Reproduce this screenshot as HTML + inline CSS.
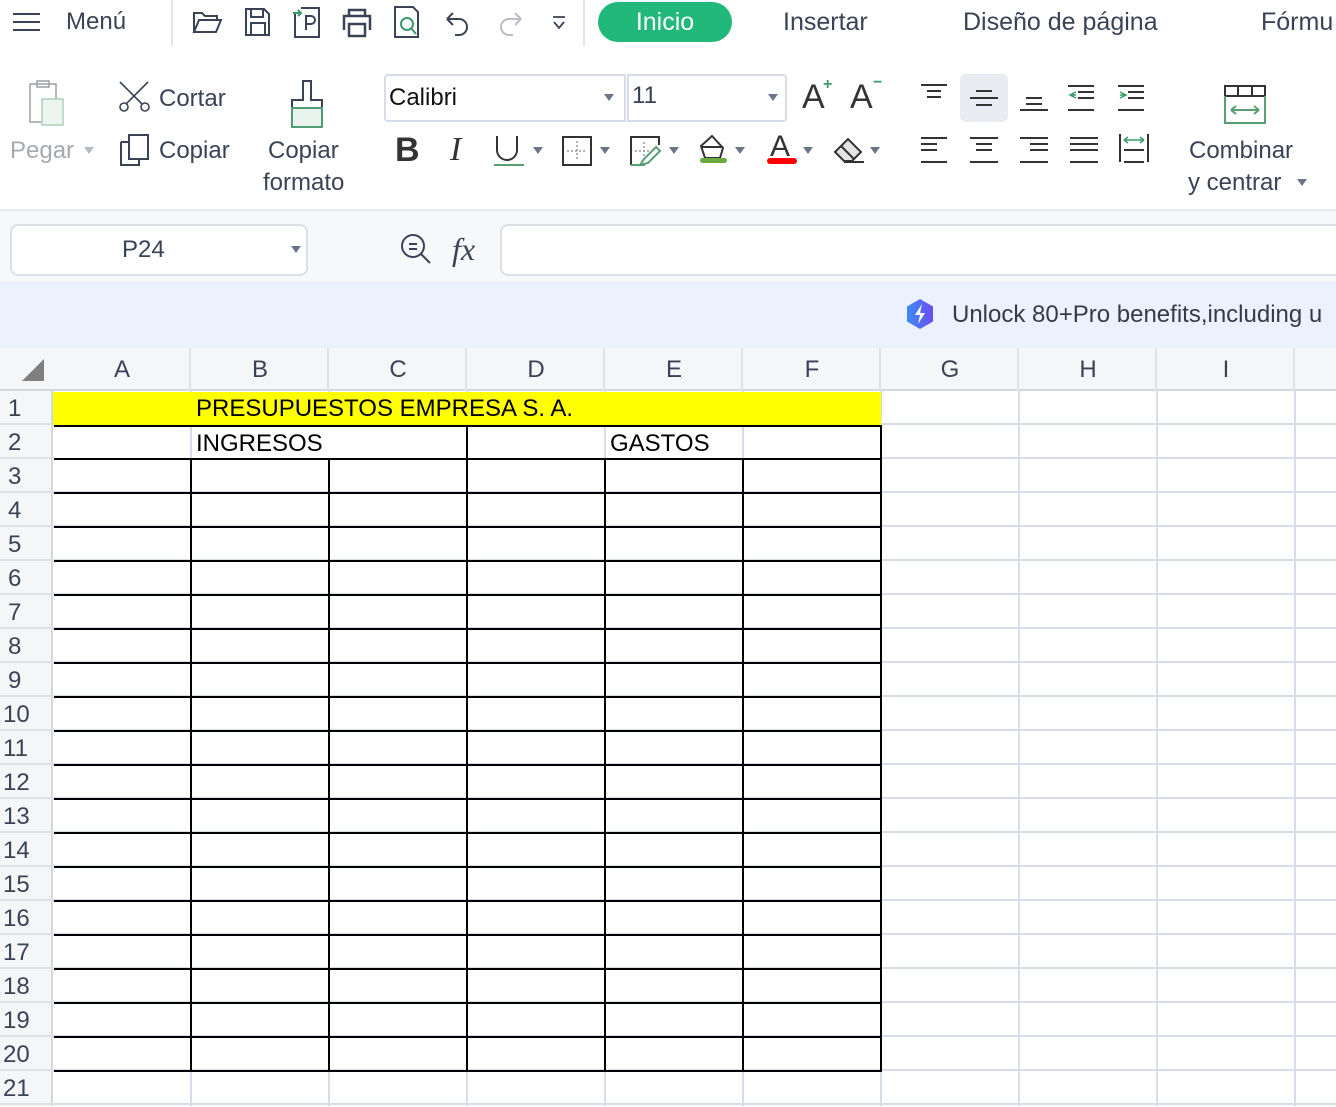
<!DOCTYPE html>
<html><head><meta charset="utf-8"><style>
*{margin:0;padding:0;box-sizing:border-box}
body{width:1336px;height:1106px;overflow:hidden;background:#fff;font-family:"Liberation Sans",sans-serif;color:#3a4355;position:relative}
.a{position:absolute}
.t{position:absolute;font-size:24px;color:#3a4355;white-space:nowrap}
svg{position:absolute;overflow:visible}
.rh{position:absolute;left:0;width:53px;height:34px;font-size:24px;color:#3a4355;padding-left:8px;line-height:36px}
.ch{position:absolute;top:348px;height:43px;width:138px;text-align:center;font-size:24px;line-height:43px;color:#3a4355}
.tri{position:absolute;width:0;height:0;border-left:5px solid transparent;border-right:5px solid transparent;border-top:7px solid #6b7588}
.vl{position:absolute;top:391px;width:2px;height:715px;background:#d6deea}
</style></head><body>
<!-- top bar -->
<svg style="left:12px;top:12px" width="30" height="20"><path d="M1 2H28M1 10H28M1 18H28" stroke="#3a4355" stroke-width="2"/></svg>
<div class="t" style="left:66px;top:8px">Menú</div>
<div class="a" style="left:171px;top:0;width:2px;height:46px;background:#e2e4e8"></div>
<div class="a" style="left:583px;top:0;width:2px;height:46px;background:#e2e4e8"></div>
<svg style="left:192px;top:10px" width="32" height="26" fill="none" stroke="#3a4355" stroke-width="2"><path d="M2 22V3h8l3 3h12v4M2 22l5-12h22l-5 12z"/></svg>
<svg style="left:244px;top:7px" width="28" height="30" fill="none" stroke="#3a4355" stroke-width="2"><path d="M2 2h18l5 5v21H2z M7 2v8h12V2 M7 28V16h14v12"/></svg>
<svg style="left:293px;top:6px" width="30" height="32" fill="none" stroke="#3a4355" stroke-width="2"><path d="M2 8V31h24V2H8"/><path d="M0 7h8M5 4l3 3-3 3" stroke="#3c9a6a"/><path d="M13 24V10h5a4 4 0 010 8h-5"/></svg>
<svg style="left:342px;top:8px" width="30" height="30" fill="none" stroke="#3a4355" stroke-width="2.5"><path d="M7 7V2h16v5M2 22V8h26v14M7 16h16v12H7z"/></svg>
<svg style="left:393px;top:5px" width="30" height="34" fill="none" stroke="#3a4355" stroke-width="2"><path d="M2 2h18l5 5v25H2z"/><circle cx="14" cy="19" r="6" stroke="#3c9a6a"/><path d="M18 23l5 6" stroke="#3c9a6a"/></svg>
<svg style="left:444px;top:10px" width="28" height="26" fill="none" stroke="#3a4355" stroke-width="2"><path d="M3 9h12a8 8 0 010 16h-4M3 9l6-6M3 9l6 6"/></svg>
<svg style="left:496px;top:10px" width="28" height="26" fill="none" stroke="#b8bcc4" stroke-width="2"><path d="M25 9H13a8 8 0 000 16h4M25 9l-6-6M25 9l-6 6"/></svg>
<svg style="left:551px;top:15px" width="16" height="16" fill="none" stroke="#3a4355" stroke-width="1.8"><path d="M2 2h12M3 7l5 6 5-6"/></svg>
<div class="a" style="left:598px;top:2px;width:134px;height:40px;border-radius:20px;background:#21b87a;color:#fff;font-size:25px;text-align:center;line-height:40px">Inicio</div>
<div class="t" style="left:783px;top:8px;font-size:25px">Insertar</div>
<div class="t" style="left:963px;top:8px;font-size:25px">Diseño de página</div>
<div class="t" style="left:1261px;top:8px;font-size:25px">Fórmu</div>
<!-- ribbon -->
<svg style="left:28px;top:79px" width="40" height="48" fill="none" stroke="#9a9ea6" stroke-width="1.5"><path d="M2 5h26v38H2z"/><path d="M9 2h12v6H9z"/><rect x="14" y="20" width="21" height="26" fill="#eef5f0" stroke="#a9d2b8"/></svg>
<div class="t" style="left:10px;top:137px;color:#a5a9b0">Pegar</div>
<div class="tri" style="left:84px;top:147px;border-top-color:#b5b9c0"></div>
<svg style="left:118px;top:80px" width="34" height="32" fill="none" stroke="#3a4355" stroke-width="1.6"><path d="M2 2l22 22M30 2L8 24"/><circle cx="6" cy="27" r="4"/><circle cx="27" cy="27" r="4"/></svg>
<div class="t" style="left:159px;top:85px">Cortar</div>
<svg style="left:119px;top:133px" width="32" height="34" fill="none" stroke="#3a4355" stroke-width="2"><path d="M10 2h19v24H10z M2 9h8M2 9v23h18v-6"/></svg>
<div class="t" style="left:159px;top:137px">Copiar</div>
<svg style="left:288px;top:79px" width="40" height="50" fill="none" stroke="#3a4355" stroke-width="2"><path d="M15 2h8v19h11v8H4v-8h11z"/><rect x="4" y="29" width="30" height="19" fill="#eaf4ee" stroke="#4f9c72"/></svg>
<div class="t" style="left:268px;top:137px">Copiar</div>
<div class="t" style="left:263px;top:169px">formato</div>
<div class="a" style="left:384px;top:74px;width:242px;height:48px;border:2px solid #d6dce8;border-radius:4px 0 0 4px"></div>
<div class="t" style="left:389px;top:84px;color:#111">Calibri</div>
<div class="tri" style="left:604px;top:94px"></div>
<div class="a" style="left:627px;top:74px;width:160px;height:48px;border:2px solid #d6dce8;border-radius:0 4px 4px 0"></div>
<div class="t" style="left:632px;top:82px">11</div>
<div class="tri" style="left:768px;top:94px"></div>
<div class="t" style="left:802px;top:78px;font-size:34px;color:#333">A</div><div class="t" style="left:823px;top:76px;font-size:16px;color:#3c9a6a;font-weight:bold">+</div>
<div class="t" style="left:850px;top:78px;font-size:34px;color:#333">A</div><div class="t" style="left:873px;top:74px;font-size:16px;color:#3c9a6a;font-weight:bold">−</div>
<div class="t" style="left:395px;top:131px;font-size:34px;font-weight:bold;color:#333">B</div>
<div class="t" style="left:450px;top:131px;font-size:34px;font-style:italic;color:#333;font-family:'Liberation Serif',serif">I</div>
<svg style="left:494px;top:134px" width="30" height="34" fill="none" stroke="#333" stroke-width="2"><path d="M3 2v14a10 10 0 0020 0V2"/><path d="M0 31h30" stroke="#5a9e74"/></svg>
<div class="tri" style="left:533px;top:147px"></div>
<svg style="left:562px;top:136px" width="30" height="30" fill="none" stroke="#333" stroke-width="2"><rect x="1" y="1" width="28" height="28"/><path d="M15 5v20M5 15h20" stroke="#999" stroke-dasharray="2 2" stroke-width="1.5"/></svg>
<div class="tri" style="left:600px;top:147px"></div>
<svg style="left:630px;top:136px" width="34" height="30" fill="none" stroke="#333" stroke-width="2"><path d="M1 29V1h28v8"/><path d="M14 6v18M5 15h16" stroke="#999" stroke-dasharray="2 2" stroke-width="1.5"/><path d="M10 29l4-6 12-12 4 4-12 12zM1 29h14" stroke="#5a9e74"/></svg>
<div class="tri" style="left:669px;top:147px"></div>
<svg style="left:699px;top:134px" width="32" height="32" fill="none" stroke="#333" stroke-width="2"><path d="M2 12l11-10 11 12-3 10H6z"/><path d="M2 13h22" /><rect x="1" y="24" width="27" height="5" rx="2.5" fill="#6aaa3f" stroke="none"/></svg>
<div class="tri" style="left:735px;top:147px"></div>
<div class="t" style="left:770px;top:130px;font-size:30px;color:#333">A</div>
<div class="a" style="left:767px;top:158px;width:30px;height:6px;border-radius:3px;background:#f00"></div>
<div class="tri" style="left:803px;top:147px"></div>
<svg style="left:833px;top:136px" width="36" height="30" fill="none" stroke="#333" stroke-width="2"><path d="M2 16L15 3l13 13-9 9H11z" fill="#e4e4e4"/><path d="M8 10l13 13M11 26h20"/></svg>
<div class="tri" style="left:870px;top:147px"></div>
<svg style="left:918px;top:82px" width="240" height="90" fill="none" stroke="#333" stroke-width="2">
<path d="M3 3h26M9 9h14M9 15h14"/>
<rect x="42" y="-8" width="48" height="48" rx="6" fill="#e9ecf0" stroke="none"/>
<path d="M52 16h28M58 9h16M58 23h16"/>
<path d="M102 28h28M108 22h16M108 16h16"/>
<path d="M150 4h26M160 10h16M160 16h16M150 28h26"/><path d="M158 10l-6 3 6 3M152 13h6" stroke="#3c9a6a" stroke-width="1.5"/>
<path d="M200 4h26M210 10h16M210 16h16M200 28h26"/><path d="M202 10l6 3-6 3M202 13h6" stroke="#3c9a6a" stroke-width="1.5"/>
<path d="M3 56h26M3 62h16M3 68h16M3 80h26"/>
<path d="M52 56h28M58 62h16M58 68h16M52 80h28"/>
<path d="M102 56h28M112 62h18M112 68h18M102 80h28"/>
<path d="M152 56h28M152 62h28M152 68h28M152 80h28"/>
<path d="M202 52v28M230 52v28M206 68h20M206 80h20"/><path d="M206 58h20M206 58l4-3M206 58l4 3M226 58l-4-3M226 58l-4 3" stroke="#3c9a6a" stroke-width="1.5"/>
</svg>
<svg style="left:1224px;top:85px" width="44" height="40" fill="none" stroke-width="2"><path d="M1 1h40v10H1z M14 1v10M28 1v10" stroke="#333"/><path d="M1 11v27h40V11" stroke="#5a9e74"/><path d="M7 25h28M7 25l5-4M7 25l5 4M35 25l-5-4M35 25l-5 4" stroke="#5a9e74"/></svg>
<div class="t" style="left:1189px;top:137px">Combinar</div>
<div class="t" style="left:1188px;top:169px">y centrar</div>
<div class="tri" style="left:1297px;top:179px"></div>
<!-- formula bar -->
<div class="a" style="left:0;top:209px;width:1336px;height:72px;background:#f7f8fa;border-top:2px solid #e8eaee"></div>
<div class="a" style="left:10px;top:224px;width:298px;height:52px;background:#fff;border:2px solid #dcdfe4;border-radius:8px"></div>
<div class="t" style="left:122px;top:236px">P24</div>
<div class="tri" style="left:291px;top:246px"></div>
<svg style="left:400px;top:233px" width="34" height="34" fill="none" stroke="#3a4355" stroke-width="2"><circle cx="13" cy="13" r="11"/><path d="M9 11h8M9 16h8M21 21l9 9"/></svg>
<div class="t" style="left:452px;top:231px;font-family:'Liberation Serif',serif;font-style:italic;font-size:32px">fx</div>
<div class="a" style="left:500px;top:224px;width:850px;height:52px;background:#fff;border:2px solid #dcdfe4;border-radius:8px"></div>
<!-- banner -->
<div class="a" style="left:0;top:281px;width:1336px;height:67px;background:#ecf2fd"></div>
<svg style="left:905px;top:298px" width="30" height="32"><defs><linearGradient id="g" x1="0" x2="1"><stop offset="0" stop-color="#3b8cf6"/><stop offset="1" stop-color="#6b4cf6"/></linearGradient></defs><path d="M15 1l13 7.5v15L15 31 2 23.5v-15z" fill="url(#g)"/><path d="M17 6l-7 11h5l-2 9 7-11h-5z" fill="#fff"/></svg>
<div class="t" style="left:952px;top:301px;color:#333b48">Unlock 80+Pro benefits,including u</div>
<!-- sheet -->
<div class="a" style="left:0;top:348px;width:1336px;height:43px;background:#f5f6f8;border-bottom:2px solid #d5d7db"></div>
<div class="a" style="left:0;top:391px;width:53px;height:715px;background:#f5f6f8;border-right:2px solid #d5d7db"></div>
<div class="a" style="left:22px;top:359px;width:0;height:0;border-left:22px solid transparent;border-bottom:22px solid #7f7f7f"></div>
<div class="a" style="left:53px;top:348px;width:1283px;height:43px;background:repeating-linear-gradient(90deg,transparent 0 136px,#dfe1e5 136px 138px)"></div>
<div class="ch" style="left:53px">A</div><div class="ch" style="left:191px">B</div><div class="ch" style="left:329px">C</div><div class="ch" style="left:467px">D</div><div class="ch" style="left:605px">E</div><div class="ch" style="left:743px">F</div><div class="ch" style="left:881px">G</div><div class="ch" style="left:1019px">H</div><div class="ch" style="left:1157px">I</div>
<div class="a" style="left:0;top:391px;width:53px;height:715px;background:repeating-linear-gradient(180deg,transparent 0 32px,#dfe1e5 32px 34px)"></div>
<div class="vl" style="left:190px"></div><div class="vl" style="left:328px"></div><div class="vl" style="left:466px"></div><div class="vl" style="left:604px"></div><div class="vl" style="left:742px"></div><div class="vl" style="left:880px"></div><div class="vl" style="left:1018px"></div><div class="vl" style="left:1156px"></div><div class="vl" style="left:1294px"></div>
<div class="a" style="left:53px;top:391px;width:1283px;height:715px;background:repeating-linear-gradient(180deg,transparent 0 32px,#d6deea 32px 34px)"></div>
<div class="a" style="left:53px;top:392px;width:828px;height:33px;background:#ff0"></div>
<div class="t" style="left:196px;top:395px;color:#000">PRESUPUESTOS EMPRESA S. A.</div>
<!-- row 2 -->
<div class="a" style="left:54px;top:425px;width:828px;height:34px;background:#fff;border-top:2px solid #000;border-right:2px solid #000"></div>
<div class="a" style="left:190px;top:427px;width:2px;height:32px;background:#d6deea"></div>
<div class="a" style="left:466px;top:427px;width:2px;height:32px;background:#000"></div>
<div class="a" style="left:604px;top:427px;width:2px;height:32px;background:#d6deea"></div>
<div class="a" style="left:742px;top:427px;width:2px;height:32px;background:#d6deea"></div>
<div class="t" style="left:196px;top:430px;color:#000">INGRESOS</div>
<div class="t" style="left:610px;top:430px;color:#000">GASTOS</div>
<!-- rows 3-20 thick grid -->
<div class="a" style="left:54px;top:458px;width:828px;height:614px;background:repeating-linear-gradient(90deg,transparent 0 136px,#000 136px 138px),repeating-linear-gradient(180deg,#000 0 2px,transparent 2px 34px)"></div>
<div class="a" style="left:54px;top:1070px;width:828px;height:2px;background:#000"></div>
<div class="rh" style="top:391px">1</div><div class="rh" style="top:425px">2</div><div class="rh" style="top:459px">3</div><div class="rh" style="top:493px">4</div><div class="rh" style="top:527px">5</div><div class="rh" style="top:561px">6</div><div class="rh" style="top:595px">7</div><div class="rh" style="top:629px">8</div><div class="rh" style="top:663px">9</div><div class="rh" style="top:697px;padding-left:3px">10</div><div class="rh" style="top:731px;padding-left:3px">11</div><div class="rh" style="top:765px;padding-left:3px">12</div><div class="rh" style="top:799px;padding-left:3px">13</div><div class="rh" style="top:833px;padding-left:3px">14</div><div class="rh" style="top:867px;padding-left:3px">15</div><div class="rh" style="top:901px;padding-left:3px">16</div><div class="rh" style="top:935px;padding-left:3px">17</div><div class="rh" style="top:969px;padding-left:3px">18</div><div class="rh" style="top:1003px;padding-left:3px">19</div><div class="rh" style="top:1037px;padding-left:3px">20</div><div class="rh" style="top:1071px;padding-left:3px">21</div>
</body></html>
